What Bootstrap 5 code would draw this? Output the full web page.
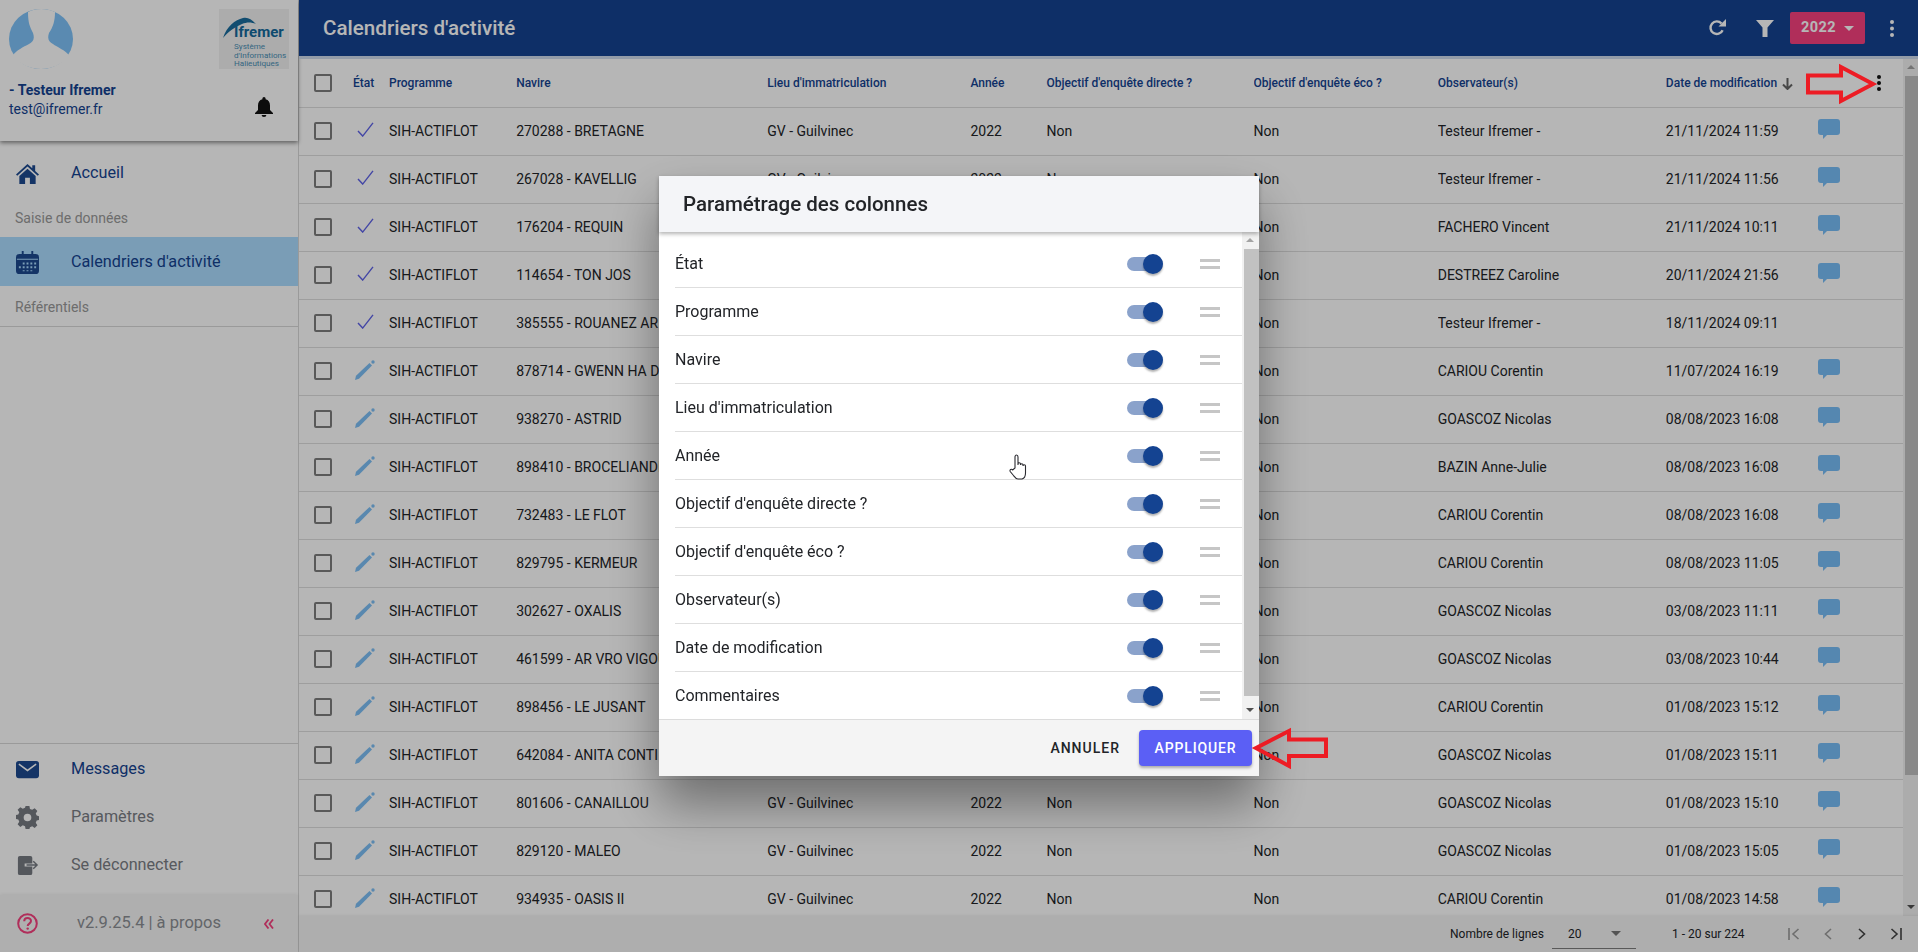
<!DOCTYPE html>
<html lang="fr">

<head>
    <meta charset="UTF-8">
    <meta name="viewport" content="width=device-width, initial-scale=1.0">
    <title>Calendriers d'activité</title>
    <link href="https://cdn.jsdelivr.net/npm/bootstrap@5.3.0/dist/css/bootstrap.min.css" rel="stylesheet">
    <style>
        html, body { height: 952px; overflow: hidden; }
        body {
            font-family: Roboto, "Liberation Sans", sans-serif;
            font-size: 14px;
            color: #222428;
            background: #fff;
        }

        /* Side menu */
        .side-menu { width: 299px; height: 952px; border-right: 1px solid #d8d8d8; flex: none; }
        .side-head { height: 141px; padding: 9px 9px 0; box-shadow: 0 2px 4px rgba(0, 0, 0, .45); position: relative; }
        .side-avatar { width: 64px; height: 60px; display: block; }
        .side-logo { width: 70px; height: 60px; background: #f2f2f2; padding: 16px 0 0 15px; position: relative; overflow: hidden; }
        .side-logo svg { position: absolute; left: 4px; top: 5px; }
        .logo-name { font-size: 15px; font-weight: 700; line-height: 14px; color: #14699c; }
        .logo-sub { font-size: 8.1px; line-height: 8.6px; margin-top: 3px; color: #4a8fb5; white-space: nowrap; }
        .side-user { margin-top: 12px; color: #144391; line-height: 19px; }
        .side-bell { margin-top: 14px; margin-right: 16px; }
        .side-menu .nav-link { height: 48px; padding: 0 0 0 16px; font-size: 16.2px; color: #144391; display: flex; align-items: center; }
        .side-menu .nav-link svg { width: 23px; height: 23px; margin-right: 32px; flex: none; fill: #1c4a90; }
        .side-menu .nav-link.is-on { height: 49px; padding-top: 1px; background: #abdcff; }
        .side-menu .nav-link.is-grey { color: #7a7d84; }
        .side-menu .nav-link.is-grey svg { fill: #767a82; }
        .side-label { color: #999; padding: 0 0 0 15px; line-height: 22px; font-size: 14px; }
        .label-saisie { margin: 10px 0 8px; }
        .label-ref { margin-top: 10px; padding-bottom: 8px; border-bottom: 1px solid #d8d8d8; }
        .side-bottom { border-top: 1px solid #d8d8d8; padding: 1px 0 6px; }
        .side-foot { height: 57px; background: #f5f5f5; box-shadow: 0 -1px 3px rgba(0, 0, 0, .06); padding-left: 17px; color: #8b8e93; font-size: 16.5px; }
        .foot-version { margin-left: 39px; }

        /* Top bar */
        .top-bar { height: 56px; background: #144391; color: #fff; padding: 0 3px 0 24px; box-shadow: 0 3px 0 #cfdbec; position: relative; z-index: 2; flex: none; }
        .top-title { font-size: 20.6px; font-weight: 500; }
        .top-btn { width: 48px; height: 48px; display: flex; align-items: center; justify-content: center; }
        .year-btn { width: 75px; height: 32px; background: #f7417f; border-radius: 2px; font-weight: 700; font-size: 14.5px; letter-spacing: .4px; margin: 0 3px 0 1px; }
        .year-btn i { border: 5px solid transparent; border-top-color: #fff; border-bottom: 0; margin-left: 8px; }

        /* Table */
        .grid-wrap { height: 857px; margin-top: 3px; overflow: hidden; flex: none; }
        .grid-table { table-layout: fixed; width: 1604px; border-collapse: collapse; }
        .grid-table td, .grid-table th { padding: 0; height: 48px; border-bottom: 1px solid #dedede; white-space: nowrap; overflow: hidden; vertical-align: middle; }
        .grid-table th { font-size: 12px; font-weight: 500; color: #144391; }
        .grid-table svg { display: block; }
        .box { display: block; width: 18px; height: 18px; border: 2px solid #7d7d7d; border-radius: 2px; margin-left: 15px; }
        .clip-cell { display: block; width: 143px; overflow: hidden; }
        .grid-table svg.sort-arrow { display: inline-block; margin-left: 5px; vertical-align: -3px; }
        .fake-scroll { width: 16px; flex: none; background: #f1f1f1; }
        .fake-scroll b { display: block; background: #c1c1c1; margin-left: 2px; }
        .scroll-up, .scroll-down { display: block; height: 17px; position: relative; }
        .scroll-up::after, .scroll-down::after { content: ""; position: absolute; left: 4px; top: 6px; border: 4px solid transparent; }
        .scroll-up::after { border-bottom-color: #a3a3a3; border-top: 0; }
        .scroll-down::after { border-top-color: #505050; border-bottom: 0; }
        .grid-foot { height: 36px; background: #f4f4f4; box-shadow: 0 -1px 2px rgba(0, 0, 0, .06); font-size: 12px; flex: none; position: relative; z-index: 1; white-space: nowrap; }
        .foot-lines { margin-left: 1151px; width: 93px; }
        .foot-select { width: 84px; height: 30px; margin: 0 36px 0 9px; padding-left: 16px; border-bottom: 1px solid #7d7d7d; }
        .foot-select i { border: 5px solid transparent; border-top-color: #757575; border-bottom: 0; margin: 0 15px 0 auto; }
        .foot-count { width: 72px; margin-right: 33px; }
        .foot-nav { width: 34px; display: flex; justify-content: center; }

        /* Column modal */
        .modal-backdrop.dim-layer { --bs-backdrop-opacity: .285; }
        .col-modal { overflow: hidden; }
        .col-modal .modal-dialog { max-width: 600px; margin: 176px auto 0; }
        .col-modal .modal-content { height: 600px; border: 0; border-radius: 0; box-shadow: 0 28px 48px rgba(0, 0, 0, .4); }
        .col-modal .modal-header { height: 56px; background: #f4f5f8; border: 0; border-radius: 0; padding: 0 0 0 24px; box-shadow: 0 2px 4px rgba(0, 0, 0, .3); position: relative; z-index: 1; flex: none; }
        .col-modal .modal-title { font-size: 20.5px; font-weight: 500; color: #222428; line-height: 1; }
        .col-modal .modal-body { padding: 0; height: 487px; flex: none; overflow: hidden; }
        .col-list { padding: 8px 0 0 16px; width: 583px; flex: none; }
        .col-row { height: 48px; border-bottom: 1px solid #dedede; font-size: 16px; color: #222428; }
        .col-row:last-child { border-bottom: 0; }
        .col-label { flex: 1; }
        .col-toggle { width: 34px; height: 14px; border-radius: 7px; background: #8aa2cb; position: relative; margin-right: 39px; }
        .col-toggle::after { content: ""; position: absolute; left: 16px; top: -3px; width: 20px; height: 20px; border-radius: 50%; background: #144391; box-shadow: 0 2px 2px rgba(0, 0, 0, .3); }
        .col-grip { width: 20px; height: 10px; border-top: 3px solid #c6c6c6; border-bottom: 3px solid #c6c6c6; margin-right: 22px; }
        .col-modal .fake-scroll { width: 17px; }
        .col-modal .modal-footer { height: 57px; background: #f4f4f4; border-top: 1px solid #dcdcdc; border-radius: 0; padding: 0 7px 0 0; flex: none; }
        .col-modal .modal-footer > * { margin: 0; }
        .btn-annuler { font-size: 14px; font-weight: 500; letter-spacing: 1px; color: #222428; padding: 0; margin-right: 19px !important; border: 0; }
        .btn-appliquer { width: 113px; height: 36px; padding: 0; border: 0; border-radius: 4px; background: #5b5ff5; color: #fff; font-size: 14px; font-weight: 500; letter-spacing: .85px; box-shadow: 0 2px 3px rgba(0, 0, 0, .3); }

        /* Annotations over the capture */
        .red-mark { position: fixed; z-index: 1060; }
        .mark-top { left: 1804px; top: 62px; }
        .mark-apply { left: 1250px; top: 726px; }
        .hand-cursor { position: fixed; z-index: 1060; left: 1009px; top: 454px; }
    </style>
</head>

<body>
    <svg width="0" height="0" class="d-none">
        <symbol id="i-check" viewBox="0 0 18 16"><path d="M1 9.500 6 15 17 1" fill="none" stroke="#5f63e8" stroke-width="1.500"/></symbol>
        <symbol id="i-pen" viewBox="0 0 20 20"><path d="M0 20 1 15.800 14.500 3 17 5.500 4 18.800Z" fill="#7dbff5"/><circle cx="18" cy="2" r="1.700" fill="#7dbff5"/></symbol>
        <symbol id="i-bubble" viewBox="0 0 22 20"><path d="M3 0h16a3 3 0 0 1 3 3v10a3 3 0 0 1-3 3H9l-4 4v-4H3a3 3 0 0 1-3-3V3a3 3 0 0 1 3-3Z" fill="#78bdf7"/></symbol>
    </svg>

    <div class="d-flex">
        <aside class="side-menu d-flex flex-column">
            <div class="side-head">
                <div class="d-flex justify-content-between">
                    <svg class="side-avatar" viewBox="0 0 64 60">
                        <ellipse cx="32" cy="30" rx="32" ry="30" fill="#7ec2f8"/>
                        <path d="M19 3C19 14 21 18 24 24 26 30 24 33 20 35 14 38 8 41 3 47 12 56 22 60 32 60 42 60 52 56 61 47 56 41 48 38 44 35 40 33 38 30 40 24 44 18 46 12 46 3 38-1 26-1 19 3Z" fill="#fff"/>
                    </svg>
                    <div class="side-logo">
                        <svg width="36" height="26" viewBox="0 0 36 26"><path d="M0 24C4 12 12 6 20 4 25 3 28 5 33 10 28 8 24 8 19 10 12 13 6 17 0 24Z" fill="#1a6d9e"/></svg>
                        <div class="logo-name">Ifremer</div>
                        <div class="logo-sub">Système<br>d'Informations<br>Halieutiques</div>
                    </div>
                </div>
                <div class="d-flex justify-content-between align-items-center side-user">
                    <div><strong>- Testeur Ifremer</strong><br>test@ifremer.fr</div>
                    <svg width="18" height="20" viewBox="0 0 18 20" class="side-bell"><path d="M9 0a1.600 1.600 0 0 1 1.600 1.600v.7C13.600 3 15 5.600 15 8.500V13l3 3v1H0v-1l3-3V8.500C3 5.600 4.400 3 7.400 2.300v-.7A1.600 1.600 0 0 1 9 0ZM6.600 18h4.800a2.400 2 0 0 1-4.800 0Z" fill="#111"/></svg>
                </div>
            </div>
            <nav class="nav flex-column mt-2">
                <a class="nav-link" href="#"><svg viewBox="0 0 24 24"><path d="M12 2 0 13l1.300 1.400L12 4.700l10.700 9.700L24 13l-4-3.700V3.500h-3v3ZM3.500 14.500V23h6v-6.500h5V23h6v-8.500L12 7Z"/></svg>Accueil</a>
                <div class="side-label label-saisie">Saisie de données</div>
                <a class="nav-link is-on" href="#"><svg viewBox="0 0 24 24"><path d="M6 0h2v3h8V0h2v3h2.500A3.500 3.500 0 0 1 24 6.500v14a3.500 3.500 0 0 1-3.500 3.500h-17A3.500 3.500 0 0 1 0 20.500v-14A3.500 3.500 0 0 1 3.500 3H6Z"/><path d="M7 12h2v2H7Zm4 0h2v2h-2Zm4 0h2v2h-2Zm4 0h2v2h-2ZM3 16h2v2H3Zm4 0h2v2H7Zm4 0h2v2h-2Zm4 0h2v2h-2Zm4 0h2v2h-2ZM7 20h2v1H7Zm4 0h2v1h-2Zm4 0h2v1h-2ZM1 8h22v1H1Z" fill="#abdcff"/></svg>Calendriers d'activité</a>
                <div class="side-label label-ref">Référentiels</div>
            </nav>
            <nav class="nav flex-column mt-auto side-bottom">
                <a class="nav-link" href="#"><svg viewBox="0 0 24 24"><rect y="3" width="24" height="18" rx="3"/><path d="M3 6.500 12 13l9-6.500" fill="none" stroke="#fff" stroke-width="1.600"/></svg>Messages</a>
                <a class="nav-link is-grey" href="#"><svg viewBox="0 0 24 24"><path fill-rule="evenodd" d="M10 1h4l.6 3 2.300 1 2.600-1.700 2.800 2.800L20.600 8.700l1 2.300 2.400.6v4l-2.400.6-1 2.300 1.700 2.600-2.800 2.800-2.600-1.700-2.300 1L14 25h-4l-.6-2.800-2.300-1-2.600 1.700L1.700 20l1.700-2.600-1-2.300L0 14.500v-4l2.400-.6 1-2.300L1.700 5 4.500 2.200 7.100 3.900l2.300-1ZM12 9a4 4 0 1 0 0 8 4 4 0 0 0 0-8Z" transform="translate(0 -1)"/></svg>Paramètres</a>
                <a class="nav-link is-grey" href="#"><svg viewBox="0 0 24 24"><path d="M4 2h11a2 2 0 0 1 2 2v6H9v3h8v7a2 2 0 0 1-2 2H4a2 2 0 0 1-2-2V4a2 2 0 0 1 2-2Z"/><path d="M11 11.500h11m-4-4 4 4-4 4" fill="none" stroke="#767a82" stroke-width="1.500"/></svg>Se déconnecter</a>
            </nav>
            <div class="side-foot d-flex align-items-center">
                <svg width="21" height="21" viewBox="0 0 21 21"><circle cx="10.500" cy="10.500" r="9.300" fill="none" stroke="#f7417f" stroke-width="2"/><path d="M7.200 8.300c0-4.300 6.800-4.300 6.800-.2 0 2.600-3.300 2.500-3.300 5" fill="none" stroke="#f7417f" stroke-width="2"/><circle cx="10.700" cy="15.600" r="1.200" fill="#f7417f"/></svg>
                <span class="foot-version flex-grow-1">v2.9.25.4 | à propos</span>
                <svg width="10" height="10" viewBox="0 0 10 10" class="me-4"><path d="M4.500 0.500 1 5l3.500 4.500M9 0.500 5.500 5 9 9.500" fill="none" stroke="#f7417f" stroke-width="1.800"/></svg>
            </div>
        </aside>

        <main class="flex-grow-1 d-flex flex-column">
            <header class="top-bar d-flex align-items-center">
                <div class="top-title flex-grow-1">Calendriers d'activité</div>
                <span class="top-btn"><svg width="18" height="18" viewBox="0 0 18 18"><path d="M14.600 11.200A6.300 6.300 0 1 1 13.500 4.500" fill="none" stroke="#fff" stroke-width="2.400"/><path d="M10.500 7.500H18V0Z" fill="#fff"/></svg></span>
                <span class="top-btn"><svg width="18" height="17" viewBox="0 0 18 17"><path d="M0 0h18l-6.500 7.500V17h-5V7.500Z" fill="#fff"/></svg></span>
                <span class="year-btn d-flex align-items-center justify-content-center">2022<i></i></span>
                <span class="top-btn"><svg width="4" height="17" viewBox="0 0 4 17"><circle cx="2" cy="2" r="2" fill="#fff"/><circle cx="2" cy="8.500" r="2" fill="#fff"/><circle cx="2" cy="15" r="2" fill="#fff"/></svg></span>
            </header>

            <div class="grid-wrap d-flex">
                <div class="flex-grow-1 overflow-hidden">
                    <table class="grid-table">
                        <colgroup>
                            <col style="width:54px"><col style="width:36px"><col style="width:127px"><col style="width:251px"><col style="width:203px"><col style="width:76px"><col style="width:207px"><col style="width:184px"><col style="width:228px"><col style="width:152px"><col style="width:85px">
                        </colgroup>
                        <thead>
                            <tr>
                                <th><span class="box"></span></th>
                                <th>État</th>
                                <th>Programme</th>
                                <th>Navire</th>
                                <th>Lieu d'immatriculation</th>
                                <th>Année</th>
                                <th>Objectif d'enquête directe ?</th>
                                <th>Objectif d'enquête éco ?</th>
                                <th>Observateur(s)</th>
                                <th>Date de modification<svg class="sort-arrow" width="11" height="12" viewBox="0 0 11 12"><path d="M5.500 0v11M1 6.500l4.500 4.500L10 6.500" fill="none" stroke="#666" stroke-width="2"/></svg></th>
                                <th><svg width="4" height="16" viewBox="0 0 4 16" style="margin-left:59px"><circle cx="2" cy="2" r="2" fill="#111"/><circle cx="2" cy="8" r="2" fill="#111"/><circle cx="2" cy="14" r="2" fill="#111"/></svg></th>
                            </tr>
                        </thead>
                        <tbody id="gridBody"></tbody>
                    </table>
                </div>
                <div class="fake-scroll d-flex flex-column">
                    <span class="scroll-up"></span>
                    <b style="height:699px"></b>
                    <span class="flex-grow-1"></span>
                    <span class="scroll-down"></span>
                </div>
            </div>

            <footer class="grid-foot d-flex align-items-center">
                <span class="foot-lines">Nombre de lignes</span>
                <span class="foot-select d-flex align-items-center">20<i></i></span>
                <span class="foot-count">1 - 20 sur 224</span>
                <span class="foot-nav"><svg width="12" height="12" viewBox="0 0 12 12"><path d="M1 0v12M10.500 1 5 6l5.500 5" fill="none" stroke="#9a9a9a" stroke-width="1.600"/></svg></span>
                <span class="foot-nav"><svg width="8" height="12" viewBox="0 0 8 12"><path d="M7 1 1.500 6 7 11" fill="none" stroke="#9a9a9a" stroke-width="1.600"/></svg></span>
                <span class="foot-nav"><svg width="8" height="12" viewBox="0 0 8 12"><path d="M1 1l5.500 5L1 11" fill="none" stroke="#444" stroke-width="1.600"/></svg></span>
                <span class="foot-nav"><svg width="12" height="12" viewBox="0 0 12 12"><path d="M11 0v12M1.500 1 7 6l-5.500 5" fill="none" stroke="#444" stroke-width="1.600"/></svg></span>
            </footer>
        </main>
    </div>

    <!-- Column settings modal -->
    <div class="modal-backdrop show dim-layer"></div>
    <div class="modal d-block col-modal">
        <div class="modal-dialog">
            <div class="modal-content">
                <div class="modal-header">
                    <h5 class="modal-title">Paramétrage des colonnes</h5>
                </div>
                <div class="modal-body d-flex">
                    <div class="col-list" id="colList"></div>
                    <div class="fake-scroll d-flex flex-column">
                        <span class="scroll-up"></span>
                        <b style="height:447px"></b>
                        <span class="flex-grow-1"></span>
                        <span class="scroll-down"></span>
                    </div>
                </div>
                <div class="modal-footer">
                    <button type="button" class="btn btn-annuler">ANNULER</button>
                    <button type="button" class="btn btn-appliquer">APPLIQUER</button>
                </div>
            </div>
        </div>
    </div>

    <svg class="red-mark mark-top" width="74" height="44" viewBox="0 0 74 44"><path d="M4 13.500H37V5L69 22 37 39V30.500H4Z" fill="none" stroke="#ed1c24" stroke-width="4"/></svg>
    <svg class="red-mark mark-apply" width="82" height="46" viewBox="0 0 82 46"><path d="M6 22 39 5V13.500H76V30H39V40Z" fill="none" stroke="#ed1c24" stroke-width="4"/></svg>
    <svg class="hand-cursor" width="20" height="26" viewBox="0 0 20 26"><path d="M6 14V3c0-2.600 3-2.600 3 0v8-1c0-1.600 2.500-1.600 2.500 0v1c0-1.600 2.500-1.600 2.500 0v1c0-1.600 2.500-1.600 2.500 0V19c0 3-1.500 5.500-3.500 6H9c-2 0-3-1.500-4.500-3.500L1.200 17.500c-1-1.700 1.300-3 2.500-1.500Z" fill="#fff" stroke="#2a2a30" stroke-width="1.100"/></svg>

    <script>
        // rows of the grid: navire, observateur, date, validated, has comment
        const rows = [
            ["270288 - BRETAGNE", "Testeur Ifremer -", "21/11/2024 11:59", 1, 1],
            ["267028 - KAVELLIG", "Testeur Ifremer -", "21/11/2024 11:56", 1, 1],
            ["176204 - REQUIN", "FACHERO Vincent", "21/11/2024 10:11", 1, 1],
            ["114654 - TON JOS", "DESTREEZ Caroline", "20/11/2024 21:56", 1, 1],
            ["385555 - ROUANEZ AR", "Testeur Ifremer -", "18/11/2024 09:11", 1, 0],
            ["878714 - GWENN HA D", "CARIOU Corentin", "11/07/2024 16:19", 0, 1],
            ["938270 - ASTRID", "GOASCOZ Nicolas", "08/08/2023 16:08", 0, 1],
            ["898410 - BROCELIANDE", "BAZIN Anne-Julie", "08/08/2023 16:08", 0, 1],
            ["732483 - LE FLOT", "CARIOU Corentin", "08/08/2023 16:08", 0, 1],
            ["829795 - KERMEUR", "CARIOU Corentin", "08/08/2023 11:05", 0, 1],
            ["302627 - OXALIS", "GOASCOZ Nicolas", "03/08/2023 11:11", 0, 1],
            ["461599 - AR VRO VIGOU", "GOASCOZ Nicolas", "03/08/2023 10:44", 0, 1],
            ["898456 - LE JUSANT", "CARIOU Corentin", "01/08/2023 15:12", 0, 1],
            ["642084 - ANITA CONTI", "GOASCOZ Nicolas", "01/08/2023 15:11", 0, 1],
            ["801606 - CANAILLOU", "GOASCOZ Nicolas", "01/08/2023 15:10", 0, 1],
            ["829120 - MALEO", "GOASCOZ Nicolas", "01/08/2023 15:05", 0, 1],
            ["934935 - OASIS II", "CARIOU Corentin", "01/08/2023 14:58", 0, 1]
        ];

        document.getElementById("gridBody").innerHTML = rows.map((r, i) => {
            const state = r[3]
                ? '<svg width="17" height="15" style="margin:-4px 0 0 4px"><use href="#i-check"/></svg>'
                : '<svg width="20" height="20" style="margin:-2px 0 0 2px"><use href="#i-pen"/></svg>';
            const bubble = r[4] ? '<svg width="22" height="20" style="margin-top:-4px"><use href="#i-bubble"/></svg>' : '';
            // rows 3 to 14 sit behind the modal: middle cells stay empty, navire is cut at its edge
            const behind = i >= 2 && i <= 13;
            const navire = behind ? `<span class="clip-cell">${r[0]}</span>` : r[0];
            const middle = behind ? '<td></td><td></td><td></td>' : '<td>GV - Guilvinec</td><td>2022</td><td>Non</td>';
            return `<tr><td><span class="box"></span></td><td>${state}</td><td>SIH-ACTIFLOT</td><td>${navire}</td>${middle}<td>Non</td><td>${r[1]}</td><td>${r[2]}</td><td>${bubble}</td></tr>`;
        }).join("");

        const cols = ["État", "Programme", "Navire", "Lieu d'immatriculation", "Année", "Objectif d'enquête directe ?", "Objectif d'enquête éco ?", "Observateur(s)", "Date de modification", "Commentaires"];
        document.getElementById("colList").innerHTML = cols.map(c =>
            `<div class="col-row d-flex align-items-center"><span class="col-label">${c}</span><span class="col-toggle"></span><span class="col-grip"></span></div>`
        ).join("");
    </script>
    <script src="https://cdn.jsdelivr.net/npm/bootstrap@5.3.0/dist/js/bootstrap.bundle.min.js"></script>
</body>

</html>
